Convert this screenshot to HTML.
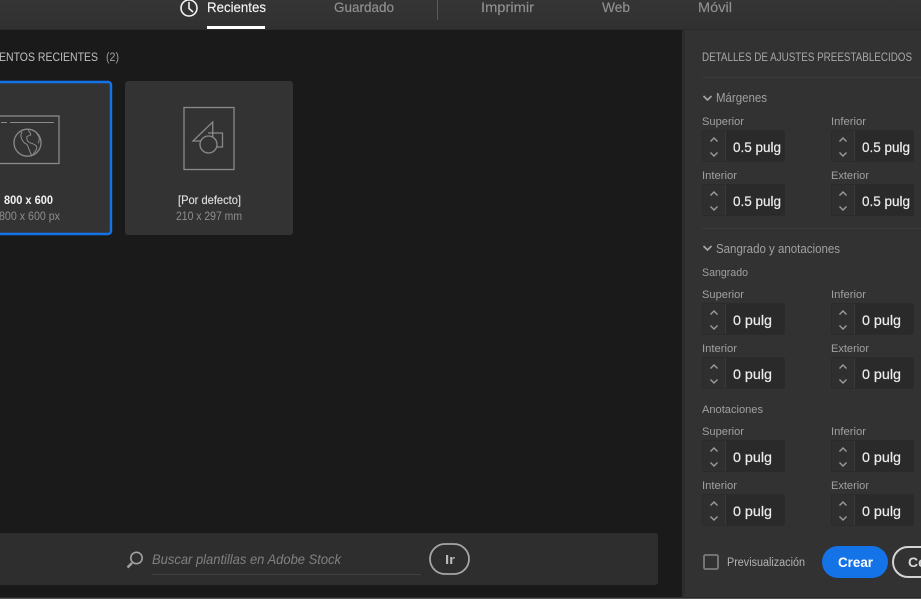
<!DOCTYPE html>
<html lang="es">
<head>
<meta charset="utf-8">
<title>Nuevo documento</title>
<style>
html,body{margin:0;padding:0;background:#1a1a1a;width:921px;height:599px;overflow:hidden}
svg{display:block}
text{font-family:"Liberation Sans",sans-serif;font-size:12px;fill:#a8a8a8}
.lab{font-size:11px;fill:#a0a0a0}
.val{font-size:14px;fill:#ececec;stroke:#ececec;stroke-width:.2px}
.tab{font-size:14px;fill:#909090;stroke:#909090;stroke-width:.15px}
.arrow{fill:none;stroke:#9c9c9c;stroke-width:1.4}
.ic{fill:none;stroke:#8a8a8a;stroke-width:1.3}
</style>
</head>
<body>
<svg width="921" height="599" viewBox="0 0 921 599" xmlns="http://www.w3.org/2000/svg">
<defs>
<linearGradient id="top" x1="0" y1="0" x2="0" y2="1"><stop offset="0" stop-color="#353535"/><stop offset="1" stop-color="#303030"/></linearGradient>
<g id="f">
<rect x=".5" y=".5" width="82" height="31" rx="2" fill="#2f2f2f" stroke="#2b2b2b"/>
<rect x="24" y="1" width="58" height="30" rx="1" fill="#2a2a2a"/>
<rect x="23" y="1" width="1" height="30" fill="#3a3a3a"/>
<path class="arrow" d="M8.500 11.500 L12 8 L15.500 11.500 M8.500 22.500 L12 26 L15.500 22.500"/>
</g>
</defs>

<rect width="921" height="599" fill="#1a1a1a"/>
<rect width="921" height="30" fill="url(#top)"/>
<rect y="29" width="921" height="1" fill="#2a2a2a"/>

<!-- tabs -->
<g fill="none" stroke="#f2f2f2" stroke-width="1.6">
<circle cx="189" cy="8" r="8"/>
<path d="M189 2 V8.500 L193 12"/>
</g>
<text x="207" y="12" class="tab" style="fill:#f5f5f5;stroke:#f5f5f5" textLength="59" lengthAdjust="spacingAndGlyphs">Recientes</text>
<rect x="207" y="26" width="58" height="3" fill="#fff"/>
<text x="334" y="12" class="tab" textLength="60" lengthAdjust="spacingAndGlyphs">Guardado</text>
<rect x="437" y="0" width="1" height="20" fill="#5a5a5a"/>
<text x="481" y="12" class="tab" textLength="53" lengthAdjust="spacingAndGlyphs">Imprimir</text>
<text x="602" y="12" class="tab" textLength="28" lengthAdjust="spacingAndGlyphs">Web</text>
<text x="698" y="12" class="tab" textLength="34" lengthAdjust="spacingAndGlyphs">Móvil</text>

<!-- heading -->
<text x="-1" y="61" style="font-size:11.500px;fill:#c0c0c0" textLength="99" lengthAdjust="spacingAndGlyphs">ENTOS RECIENTES</text>
<text x="106" y="61" style="font-size:11.500px;fill:#a0a0a0" textLength="13" lengthAdjust="spacingAndGlyphs">(2)</text>

<!-- card 1 -->
<rect x="-10" y="82" width="121" height="152" rx="3" fill="#333" stroke="#1473e6" stroke-width="2.400"/>
<g class="ic">
<rect x="-20" y="116" width="79" height="47.500"/>
<path d="M1 122.500 H7 M10 122.500 H54" stroke-width="1"/>
<circle cx="27.500" cy="142.700" r="13.500"/>
<g stroke-width="1">
<path d="M22 131.700 C20.500 134 20 137 23.300 141.700 C25 144 27 144 27.300 145 C28.500 147 28.500 149 29.300 150 L31.700 155.500"/>
<path d="M28.300 130 C29 132 31 133 30.700 135 C29 136 26.500 136 26.700 137.300 C27 139.500 27 141 28.300 141.700 C30 143.500 32 143 33.300 144 C35 145 36.500 145.500 36.700 146.700 C37 149 36 150.500 35 151.700 L32.300 155.500"/>
<path d="M36.700 133.300 C37.500 135 39.300 136 39.300 138.300 C39.300 140 38.800 142 38.300 143.300"/>
</g>
</g>
<text x="4" y="204" style="font-size:12px;font-weight:bold;fill:#f2f2f2" textLength="49" lengthAdjust="spacingAndGlyphs">800 x 600</text>
<text x="-1" y="220" style="font-size:11.500px;fill:#8e8e8e" textLength="61" lengthAdjust="spacingAndGlyphs">800 x 600 px</text>

<!-- card 2 -->
<rect x="125" y="81" width="168" height="154" rx="3" fill="#333"/>
<g class="ic">
<rect x="184" y="107.500" width="50" height="62"/>
<path d="M212.700 122 V141 H193 Z"/>
<path d="M208 133 H222.500 V147 H217"/>
<circle cx="208.500" cy="144.500" r="8.500" fill="#333"/>
</g>
<text x="178" y="204" style="font-size:12px;fill:#dedede;stroke:#dedede;stroke-width:.15px" textLength="63" lengthAdjust="spacingAndGlyphs">[Por defecto]</text>
<text x="176" y="220" style="font-size:11.500px;fill:#8e8e8e" textLength="66" lengthAdjust="spacingAndGlyphs">210 x 297 mm</text>

<!-- search bar -->
<rect x="-10" y="533" width="668" height="52" rx="3" fill="#2e2e2e"/>
<g fill="none" stroke="#a0a0a0">
<circle cx="136.500" cy="558" r="5.700" stroke-width="1.600"/>
<path d="M132 563 L127.500 567.500" stroke-width="2.400"/>
</g>
<text x="152" y="564" style="font-size:14px;font-style:italic;fill:#808080" textLength="189" lengthAdjust="spacingAndGlyphs">Buscar plantillas en Adobe Stock</text>
<rect x="152" y="574" width="269" height="1" fill="#414141"/>
<rect x="430" y="544" width="39" height="30" rx="15" fill="none" stroke="#a6a6a6" stroke-width="1.800"/>
<text x="445" y="564" style="font-size:13px;font-weight:bold;fill:#b8b8b8" textLength="10" lengthAdjust="spacingAndGlyphs">Ir</text>

<!-- right panel -->
<rect x="682" y="30" width="239" height="569" fill="#323232"/>
<rect x="682" y="30" width="3" height="569" fill="#2c2c2c"/>
<text x="702" y="61" style="font-size:11.500px;fill:#a8a8a8" textLength="210" lengthAdjust="spacingAndGlyphs">DETALLES DE AJUSTES PREESTABLECIDOS</text>
<rect x="702" y="77" width="219" height="1" fill="#3a3a3a"/>

<path d="M703.500 96 L707.500 100 L711.500 96" fill="none" stroke="#a8a8a8" stroke-width="1.600"/>
<text x="716" y="102" style="font-size:12.500px;fill:#a0a0a0" textLength="51" lengthAdjust="spacingAndGlyphs">Márgenes</text>

<text x="702" y="125" class="lab" textLength="42" lengthAdjust="spacingAndGlyphs">Superior</text>
<text x="831" y="125" class="lab" textLength="35" lengthAdjust="spacingAndGlyphs">Inferior</text>
<use href="#f" x="702" y="130"/>
<use href="#f" x="831" y="130"/>
<text x="733" y="152" class="val" textLength="48" lengthAdjust="spacingAndGlyphs">0.5 pulg</text>
<text x="862" y="152" class="val" textLength="48" lengthAdjust="spacingAndGlyphs">0.5 pulg</text>

<text x="702" y="179" class="lab" textLength="35" lengthAdjust="spacingAndGlyphs">Interior</text>
<text x="831" y="179" class="lab" textLength="38" lengthAdjust="spacingAndGlyphs">Exterior</text>
<use href="#f" x="702" y="184"/>
<use href="#f" x="831" y="184"/>
<text x="733" y="206" class="val" textLength="48" lengthAdjust="spacingAndGlyphs">0.5 pulg</text>
<text x="862" y="206" class="val" textLength="48" lengthAdjust="spacingAndGlyphs">0.5 pulg</text>

<rect x="702" y="228" width="219" height="1" fill="#3a3a3a"/>

<path d="M703.500 246 L707.500 250 L711.500 246" fill="none" stroke="#a8a8a8" stroke-width="1.600"/>
<text x="716" y="253" style="font-size:12.500px;fill:#a0a0a0" textLength="124" lengthAdjust="spacingAndGlyphs">Sangrado y anotaciones</text>
<text x="702" y="276" class="lab" textLength="46" lengthAdjust="spacingAndGlyphs">Sangrado</text>

<text x="702" y="298" class="lab" textLength="42" lengthAdjust="spacingAndGlyphs">Superior</text>
<text x="831" y="298" class="lab" textLength="35" lengthAdjust="spacingAndGlyphs">Inferior</text>
<use href="#f" x="702" y="303"/>
<use href="#f" x="831" y="303"/>
<text x="733" y="325" class="val" textLength="39" lengthAdjust="spacingAndGlyphs">0 pulg</text>
<text x="862" y="325" class="val" textLength="39" lengthAdjust="spacingAndGlyphs">0 pulg</text>

<text x="702" y="352" class="lab" textLength="35" lengthAdjust="spacingAndGlyphs">Interior</text>
<text x="831" y="352" class="lab" textLength="38" lengthAdjust="spacingAndGlyphs">Exterior</text>
<use href="#f" x="702" y="357"/>
<use href="#f" x="831" y="357"/>
<text x="733" y="379" class="val" textLength="39" lengthAdjust="spacingAndGlyphs">0 pulg</text>
<text x="862" y="379" class="val" textLength="39" lengthAdjust="spacingAndGlyphs">0 pulg</text>

<text x="702" y="413" class="lab" textLength="61" lengthAdjust="spacingAndGlyphs">Anotaciones</text>

<text x="702" y="435" class="lab" textLength="42" lengthAdjust="spacingAndGlyphs">Superior</text>
<text x="831" y="435" class="lab" textLength="35" lengthAdjust="spacingAndGlyphs">Inferior</text>
<use href="#f" x="702" y="440"/>
<use href="#f" x="831" y="440"/>
<text x="733" y="462" class="val" textLength="39" lengthAdjust="spacingAndGlyphs">0 pulg</text>
<text x="862" y="462" class="val" textLength="39" lengthAdjust="spacingAndGlyphs">0 pulg</text>

<text x="702" y="489" class="lab" textLength="35" lengthAdjust="spacingAndGlyphs">Interior</text>
<text x="831" y="489" class="lab" textLength="38" lengthAdjust="spacingAndGlyphs">Exterior</text>
<use href="#f" x="702" y="494"/>
<use href="#f" x="831" y="494"/>
<text x="733" y="516" class="val" textLength="39" lengthAdjust="spacingAndGlyphs">0 pulg</text>
<text x="862" y="516" class="val" textLength="39" lengthAdjust="spacingAndGlyphs">0 pulg</text>

<!-- footer -->
<rect x="704" y="555" width="14" height="14" rx="1.500" fill="none" stroke="#7c7c7c" stroke-width="1.800"/>
<text x="727" y="566" style="font-size:11.500px;fill:#b4b4b4" textLength="78" lengthAdjust="spacingAndGlyphs">Previsualización</text>
<rect x="822" y="546" width="66" height="32" rx="16" fill="#1473e6"/>
<text x="838" y="567" style="font-size:14px;font-weight:bold;fill:#fff" textLength="35" lengthAdjust="spacingAndGlyphs">Crear</text>
<rect x="893" y="547" width="70" height="30" rx="15" fill="none" stroke="#d4d4d4" stroke-width="2"/>
<text x="908" y="567" style="font-size:14px;font-weight:bold;fill:#d8d8d8">Cerrar</text>

<rect y="597" width="921" height="1" fill="#2a2a2a"/>
<rect y="598" width="921" height="1" fill="#555"/>
</svg>
</body>
</html>
